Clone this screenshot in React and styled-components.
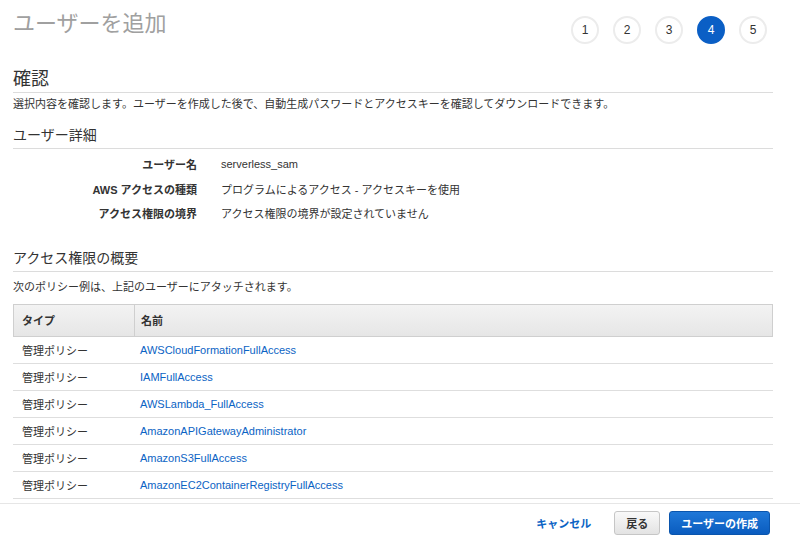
import React from "react";
import styled, { createGlobalStyle } from "styled-components";

const GlobalStyle = createGlobalStyle`
	body {
		margin: 0;
		background: #fff;
		color: #333;
		font-family: "Liberation Sans", "Noto Sans CJK JP", sans-serif;
		font-size: 11px;
	}
`;

const steps = [1, 2, 3, 4, 5];

const details = [
	{ label: "ユーザー名", value: "serverless_sam" },
	{ label: "AWS アクセスの種類", value: "プログラムによるアクセス - アクセスキーを使用" },
	{ label: "アクセス権限の境界", value: "アクセス権限の境界が設定されていません" },
];

const policies = [
	"AWSCloudFormationFullAccess",
	"IAMFullAccess",
	"AWSLambda_FullAccess",
	"AmazonAPIGatewayAdministrator",
	"AmazonS3FullAccess",
	"AmazonEC2ContainerRegistryFullAccess",
];

const App = () => {
	return (
		<Page>
			<GlobalStyle />
			<Content>
				<Header>
					<Title>ユーザーを追加</Title>
					<Steps>
						{steps.map(n => (
							<Step key={n} active={n === 4}>
								{n}
							</Step>
						))}
					</Steps>
				</Header>

				<MainHeading>確認</MainHeading>
				<Description>
					選択内容を確認します。ユーザーを作成した後で、自動生成パスワードとアクセスキーを確認してダウンロードできます。
				</Description>

				<SubHeading>ユーザー詳細</SubHeading>
				<DetailGrid>
					{details.map(d => (
						<React.Fragment key={d.label}>
							<DetailLabel>{d.label}</DetailLabel>
							<DetailValue>{d.value}</DetailValue>
						</React.Fragment>
					))}
				</DetailGrid>

				<SubHeading spaced>アクセス権限の概要</SubHeading>
				<Description small>次のポリシー例は、上記のユーザーにアタッチされます。</Description>

				<Table>
					<HeadRow>
						<HeadCell>タイプ</HeadCell>
						<HeadCell>名前</HeadCell>
					</HeadRow>
					{policies.map(p => (
						<Row key={p}>
							<Cell>管理ポリシー</Cell>
							<Cell>
								<PolicyLink href="#">{p}</PolicyLink>
							</Cell>
						</Row>
					))}
				</Table>
			</Content>

			<Footer>
				<CancelLink href="#">キャンセル</CancelLink>
				<BackButton>戻る</BackButton>
				<PrimaryButton>ユーザーの作成</PrimaryButton>
			</Footer>
		</Page>
	);
};

const Page = styled.div`
	width: 800px;
	height: 535px;
	overflow: hidden;
	display: flex;
	flex-direction: column;
`;

const Content = styled.div`
	padding: 0 27px 0 13px;
	height: 504px;
`;

const Header = styled.div`
	display: flex;
	justify-content: space-between;
	align-items: flex-start;
	padding-top: 8px;
	height: 50px;
`;

const Title = styled.h1`
	margin: 0;
	font-size: 22px;
	line-height: 32px;
	font-weight: normal;
	color: #a0a0a0;
`;

const Steps = styled.div`
	display: flex;
	gap: 14px;
	margin-top: 8px;
	margin-right: 6px;
`;

const Step = styled.div`
	width: 28px;
	height: 28px;
	box-sizing: border-box;
	border-radius: 50%;
	border: 2px solid ${p => (p.active ? "#0b5fc5" : "#ececec")};
	background: ${p => (p.active ? "#0b5fc5" : "#fff")};
	color: ${p => (p.active ? "#fff" : "#333")};
	display: flex;
	align-items: center;
	justify-content: center;
	font-size: 12px;
`;

const MainHeading = styled.h2`
	margin: 9px 0 0;
	font-size: 18px;
	line-height: 24px;
	font-weight: normal;
	color: #333;
	padding-bottom: 1px;
	border-bottom: 1px solid #dcdcdc;
`;

const Description = styled.p`
	margin: ${p => (p.small ? "7px 0 0" : "3px 0 0")};
	line-height: 16px;
`;

const SubHeading = styled.h3`
	margin: ${p => (p.spaced ? "22px 0 0" : "13px 0 0")};
	font-size: 14px;
	line-height: 20px;
	font-weight: normal;
	color: #333;
	padding-bottom: 3px;
	border-bottom: 1px solid #dcdcdc;
`;

const DetailGrid = styled.div`
	display: grid;
	grid-template-columns: 184px 1fr;
	column-gap: 24px;
	grid-auto-rows: 24.5px;
	align-items: center;
	margin-top: 3px;
`;

const DetailLabel = styled.div`
	text-align: right;
	font-weight: bold;
`;

const DetailValue = styled.div``;

const Table = styled.div`
	margin-top: 9px;
	display: flex;
	flex-direction: column;
`;

const HeadRow = styled.div`
	display: grid;
	grid-template-columns: 120px 1fr;
	height: 33px;
	box-sizing: border-box;
	border: 1px solid #cfcfcf;
	background: linear-gradient(#f3f3f3, #e6e6e6);
`;

const HeadCell = styled.div`
	display: flex;
	align-items: center;
	padding-left: 8px;
	font-weight: bold;
	& + & {
		border-left: 1px solid #cfcfcf;
		padding-left: 6px;
	}
`;

const Row = styled.div`
	display: grid;
	grid-template-columns: 120px 1fr;
	height: 27px;
	box-sizing: border-box;
	border-bottom: 1px solid #dedede;
`;

const Cell = styled.div`
	display: flex;
	align-items: center;
	padding-left: 9px;
	& + & {
		padding-left: 7px;
	}
`;

const PolicyLink = styled.a`
	color: #0b63c4;
	text-decoration: none;
	font-size: 11px;
`;

const Footer = styled.div`
	border-top: 1px solid #e6e6e6;
	display: flex;
	justify-content: flex-end;
	align-items: center;
	gap: 9px;
	padding: 7px 30px 0 0;
`;

const CancelLink = styled.a`
	color: #0b63c4;
	font-weight: bold;
	text-decoration: none;
	margin-right: 14px;
`;

const BackButton = styled.button`
	height: 24px;
	padding: 0 11px;
	border: 1px solid #c6c6c6;
	border-radius: 3px;
	background: linear-gradient(#f9f9f9, #e3e3e3);
	color: #333;
	font: bold 11px "Liberation Sans", "Noto Sans CJK JP", sans-serif;
`;

const PrimaryButton = styled.button`
	height: 24px;
	padding: 0 11px;
	border: 1px solid #0a55ad;
	border-radius: 3px;
	background: linear-gradient(#1f78d8, #0a5cbf);
	color: #fff;
	font: bold 11px "Liberation Sans", "Noto Sans CJK JP", sans-serif;
`;

export default App;
